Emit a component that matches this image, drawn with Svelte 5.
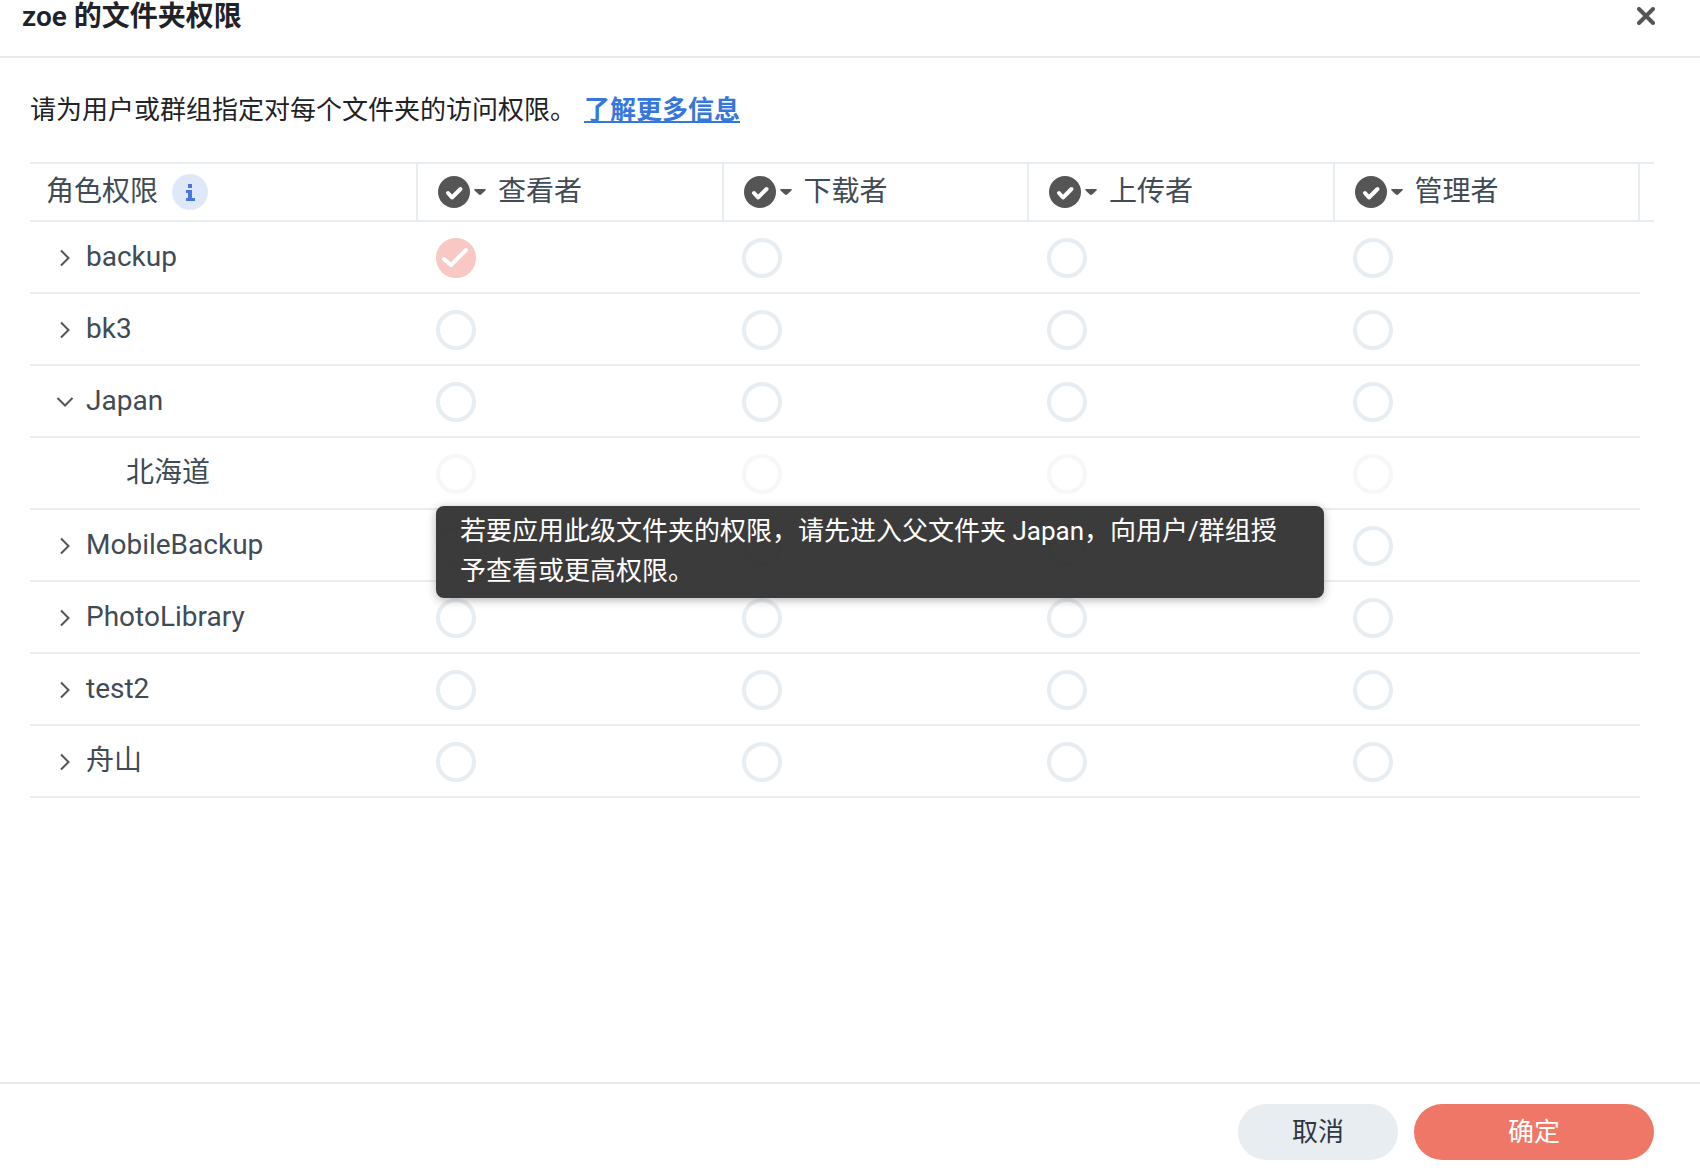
<script>
  const roles = ['查看者', '下载者', '上传者', '管理者'];

  let folders = [
    { name: 'backup', role: '查看者' },
    { name: 'bk3', role: null },
    { name: 'Japan', role: null, open: true, children: ['北海道'] },
    { name: 'MobileBackup', role: null },
    { name: 'PhotoLibrary', role: null },
    { name: 'test2', role: null },
    { name: '舟山', role: null }
  ];

  function toggle(folder) {
    folder.open = !folder.open;
    folders = folders;
  }

  function applyToAll(role) {
    folders = folders.map((f) => ({ ...f, role }));
  }
</script>

<div class="dialog">
  <header>
    <h1>zoe 的文件夹权限</h1>
    <button class="close" aria-label="关闭">
      <svg width="18" height="18" viewBox="0 0 18 18">
        <path d="M2 2L16 16M16 2L2 16" fill="none" stroke="#555" stroke-width="4" stroke-linecap="round" />
      </svg>
    </button>
  </header>

  <main>
    <p class="intro">请为用户或群组指定对每个文件夹的访问权限。<a href="#more">了解更多信息</a></p>

    <table>
      <colgroup>
        <col class="name-col" />
        {#each roles as role}
          <col />
        {/each}
        <col class="end-col" />
      </colgroup>
      <thead>
        <tr>
          <th>
            <div class="head first">
              <span>角色权限</span>
              <button class="info" aria-label="说明">
                <svg width="36" height="36" viewBox="0 0 36 36">
                  <circle cx="18" cy="18" r="18" fill="#dfe8f9" />
                  <path d="M16 10h4v4h-4zM14 16h6v8h3v3h-9v-3h2v-5h-2z" fill="#4876da" />
                </svg>
              </button>
            </div>
          </th>
          {#each roles as role}
            <th>
              <div class="head">
                <button class="apply" aria-label="全部设为{role}" on:click={() => applyToAll(role)}>
                  <svg width="32" height="32" viewBox="0 0 32 32">
                    <circle cx="16" cy="16" r="16" fill="#555" />
                    <path d="M10 17L14 21.5L22.5 13" fill="none" stroke="#fff" stroke-width="4" stroke-linecap="round" stroke-linejoin="round" />
                  </svg>
                  <svg width="12" height="6" viewBox="0 0 12 6">
                    <path d="M1 0H11Q12.4 .3 11.4 1.5L7.4 5.3Q6 6.6 4.6 5.3L.6 1.5Q-.4 .3 1 0Z" fill="#555" />
                  </svg>
                </button>
                <span>{role}</span>
              </div>
            </th>
          {/each}
          <th></th>
        </tr>
      </thead>
      <tbody>
        {#each folders as folder}
          <tr>
            <td>
              <button class="folder" aria-expanded={!!folder.open} on:click={() => toggle(folder)}>
                <svg class:open={folder.open} width="18" height="18" viewBox="0 0 18 18">
                  <path d="M5 1.5L12.5 9L5 16.5" fill="none" stroke="#555" stroke-width="2" />
                </svg>
                {folder.name}
              </button>
            </td>
            {#each roles as role}
              <td>
                <label class="role">
                  <input type="radio" name={folder.name} value={role} aria-label="{folder.name} {role}" bind:group={folder.role} />
                  {#if folder.role === role}
                    <svg width="40" height="40" viewBox="0 0 40 40">
                      <path d="M8 21L15 27L30 12" fill="none" stroke="#fff" stroke-width="4" stroke-linecap="round" stroke-linejoin="round" />
                    </svg>
                  {/if}
                </label>
              </td>
            {/each}
          </tr>
          {#if folder.open && folder.children}
            {#each folder.children as child}
              <tr>
                <td><div class="child">{child}</div></td>
                {#each roles as role, i}
                  <td>
                    <label class="role">
                      <input type="radio" name={child} value={role} aria-label="{child} {role}" disabled />
                    </label>
                    {#if i === 0}
                      <div class="tooltip" role="tooltip">
                        若要应用此级文件夹的权限，请先进入父文件夹 {folder.name}，向用户/群组授予查看或更高权限。
                      </div>
                    {/if}
                  </td>
                {/each}
              </tr>
            {/each}
          {/if}
        {/each}
      </tbody>
    </table>
  </main>

  <footer>
    <button class="btn">取消</button>
    <button class="btn primary">确定</button>
  </footer>
</div>

<style>
  :global(body) {
    background: #fff;
  }

  .dialog {
    display: flex;
    flex-direction: column;
    min-height: 100vh;
    font-family: Roboto, 'Noto Sans CJK SC', sans-serif;
    font-size: 28px;
    color: #414b55;
  }

  button {
    padding: 0;
    border: none;
    background: none;
    font: inherit;
    color: inherit;
    cursor: pointer;
  }

  svg {
    display: block;
  }

  header {
    display: flex;
    align-items: flex-start;
    justify-content: space-between;
    box-sizing: border-box;
    height: 58px;
    padding: 0 45px 0 22px;
    border-bottom: 2px solid #e5eaef;
  }

  h1 {
    margin: 0;
    font-size: 28px;
    font-weight: 600;
    line-height: 34px;
    color: #1f2226;
  }

  .close {
    padding: 7px 0;
  }

  main {
    flex: 1;
    padding: 32px 46px 32px 30px;
  }

  .intro {
    margin: 0 0 32px;
    font-size: 26px;
    line-height: 40px;
    color: #1f2226;
  }

  .intro a {
    margin-left: 8px;
    font-weight: 700;
    color: #3577dc;
    text-decoration: underline;
  }

  table {
    width: 100%;
    table-layout: fixed;
    border-collapse: separate;
    border-spacing: 0;
  }

  .name-col {
    width: 388px;
  }

  .end-col {
    width: 14px;
  }

  th {
    height: 56px;
    padding: 0;
    border: solid #e8edf1;
    border-width: 2px 2px 2px 0;
    font-weight: 400;
    text-align: left;
  }

  th:last-child {
    border-right: none;
  }

  .head {
    display: flex;
    align-items: center;
    gap: 12px;
    padding-left: 20px;
    line-height: 40px;
  }

  .head.first {
    gap: 14px;
    padding-left: 16px;
  }

  .apply {
    display: flex;
    align-items: center;
    gap: 4px;
  }

  td {
    position: relative;
    height: 70px;
    padding: 0;
    border-bottom: 2px solid #e8edf1;
  }

  td:first-child {
    line-height: 40px;
  }

  .folder {
    display: flex;
    align-items: center;
    gap: 12px;
    padding-left: 26px;
    line-height: 40px;
  }

  .folder svg {
    margin-top: 2px;
  }

  .folder svg.open {
    transform: rotate(90deg);
  }

  .child {
    padding-left: 96px;
  }

  .role {
    position: relative;
    display: block;
    width: 40px;
    height: 40px;
    margin: 2px 0 0 18px;
  }

  .role svg {
    position: absolute;
    inset: 0;
    pointer-events: none;
  }

  input {
    appearance: none;
    display: block;
    box-sizing: border-box;
    width: 40px;
    height: 40px;
    margin: 0;
    border: 4px solid #e8edf1;
    border-radius: 50%;
    background: #fff;
  }

  input:checked {
    border-color: #f8c8c4;
    background: #f8c8c4;
  }

  input:disabled {
    opacity: 0.4;
  }

  .tooltip {
    position: absolute;
    z-index: 1;
    top: 68px;
    left: 18px;
    box-sizing: border-box;
    width: 888px;
    padding: 5px 24px 7px;
    border-radius: 8px;
    background: rgba(38, 38, 38, 0.9);
    box-shadow: 0 2px 10px rgba(0, 0, 0, 0.3);
    font-size: 26px;
    line-height: 40px;
    color: #fff;
  }

  footer {
    display: flex;
    justify-content: flex-end;
    gap: 16px;
    padding: 20px 46px 10px;
    border-top: 2px solid #e5eaef;
  }

  .btn {
    width: 160px;
    height: 56px;
    padding-bottom: 5px;
    border-radius: 28px;
    background: #e8edf1;
    font-size: 26px;
    color: #2f3740;
  }

  .btn.primary {
    width: 240px;
    background: #ef7767;
    color: #fff;
  }
</style>
